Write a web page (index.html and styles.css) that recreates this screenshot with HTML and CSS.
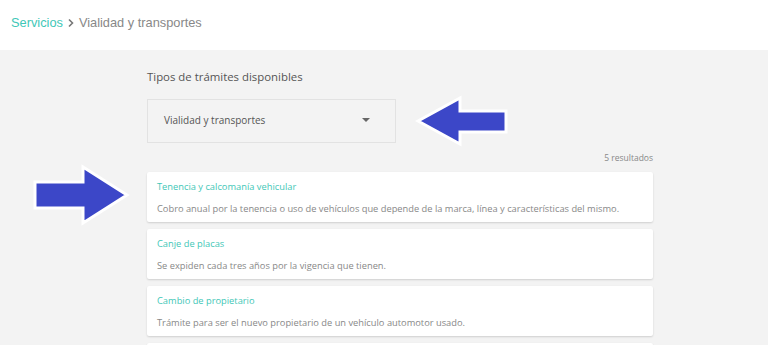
FILE: index.html
```html
<!DOCTYPE html>
<html lang="es">
<head>
<meta charset="utf-8">
<link rel="stylesheet" href="styles.css">
</head>
<body>
<header class="topbar">
  <nav class="crumbs">
    <a class="crumb-link">Servicios</a>
    <svg class="chev" width="8" height="10" viewBox="0 0 8 10"><path d="M2 1.5 L5.5 5 L2 8.5" fill="none" stroke="#777" stroke-width="1.6"/></svg>
    <span class="crumb-current">Vialidad y transportes</span>
  </nav>
</header>
<main class="page">
  <section class="content">
    <h2 class="label">Tipos de trámites disponibles</h2>
    <div class="select">
      <span>Vialidad y transportes</span>
      <span class="caret"></span>
    </div>
    <div class="count">5 resultados</div>
    <ul class="cards">
      <li class="card">
        <div class="card-title">Tenencia y calcomanía vehicular</div>
        <div class="card-desc">Cobro anual por la tenencia o uso de vehículos que depende de la marca, línea y características del mismo.</div>
      </li>
      <li class="card">
        <div class="card-title">Canje de placas</div>
        <div class="card-desc">Se expiden cada tres años por la vigencia que tienen.</div>
      </li>
      <li class="card">
        <div class="card-title">Cambio de propietario</div>
        <div class="card-desc">Trámite para ser el nuevo propietario de un vehículo automotor usado.</div>
      </li>
      <li class="card card-empty"></li>
    </ul>
  </section>
  <svg class="arrow arrow-left" width="96" height="54" viewBox="0 0 96 54">
    <polygon points="3,27 45,4 45,17 91,17 91,38 45,38 45,50" fill="#3c47c8" stroke="#fff" stroke-width="3" stroke-linejoin="miter"/>
  </svg>
  <svg class="arrow arrow-right" width="100" height="64" viewBox="0 0 100 64">
    <polygon points="5,19 53,19 53,4 97,32 53,60 53,45 5,45" fill="#3c47c8" stroke="#fff" stroke-width="3" stroke-linejoin="miter"/>
  </svg>
</main>
</body>
</html>
```
FILE: styles.css
```css
* { box-sizing: border-box; }
html, body { margin: 0; padding: 0; }
body {
  width: 768px;
  height: 345px;
  overflow: hidden;
  background: #f3f3f3;
  font-family: "Open Sans", sans-serif;
}
.topbar {
  height: 50px;
  background: #fff;
  padding: 14px 0 0 11px;
}
.crumbs {
  display: flex;
  align-items: center;
  gap: 4px;
  font-family: "Liberation Sans", Arial, sans-serif;
  font-size: 12.8px;
  line-height: 17px;
}
.crumb-link { color: #3fc7b7; }
.crumb-current { color: #888; }
.chev { margin-top: 1px; }
.page {
  position: relative;
  height: 295px;
  overflow: hidden;
}
.content {
  width: 506px;
  margin-left: 147px;
  padding-top: 18px;
}
.label {
  margin: 0;
  font-size: 11.4px;
  font-weight: 400;
  color: #555;
  line-height: 17px;
}
.select {
  margin-top: 14px;
  width: 249px;
  height: 44px;
  border: 1px solid #e2e2e2;
  display: flex;
  align-items: center;
  justify-content: space-between;
  padding: 0 25px 3px 16px;
  font-size: 10px;
  color: #555;
}
.caret {
  width: 0; height: 0;
  border-left: 4px solid transparent;
  border-right: 4px solid transparent;
  border-top: 4px solid #666;
}
.count {
  text-align: right;
  font-size: 8.5px;
  color: #888;
  margin-top: 9px;
  line-height: 12px;
}
.cards {
  list-style: none;
  margin: 8px 0 0;
  padding: 0;
  display: flex;
  flex-direction: column;
  gap: 7px;
}
.card {
  background: #fff;
  height: 50px;
  flex: none;
  border-radius: 2px;
  box-shadow: 0 1px 2px rgba(0,0,0,0.15);
  padding: 8px 10px 0;
}
.card-title {
  font-size: 9.3px;
  color: #3fc7b7;
  line-height: 13px;
}
.card-desc {
  margin-top: 9px;
  font-size: 9.3px;
  color: #888;
  line-height: 13px;
  white-space: nowrap;
}
.arrow { position: absolute; }
.arrow-left { left: 415px; top: 44px; }
.arrow-right { left: 30px; top: 113px; }
```
